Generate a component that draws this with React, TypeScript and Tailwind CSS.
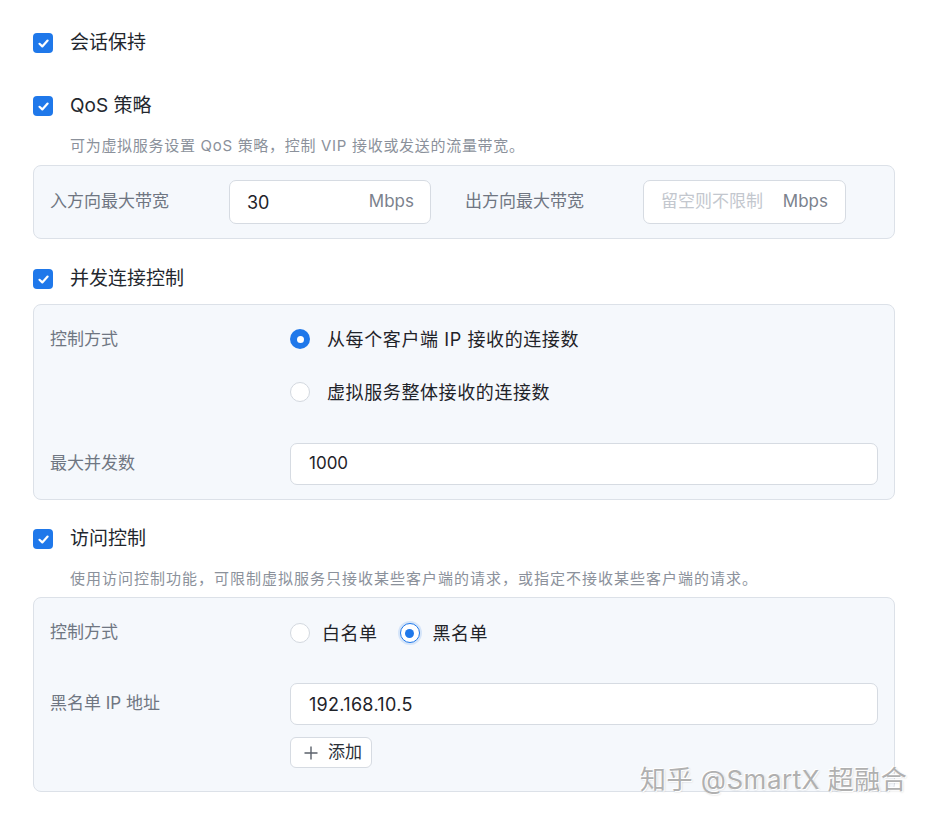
import React from "react";

const FONT = '"Inter", "Noto Sans CJK SC", "Noto Sans", sans-serif';

function Check() {
  return (
    <span className="flex h-[20px] w-[20px] items-center justify-center rounded-[4px] bg-[#1f78ea]">
      <svg width="13" height="13" viewBox="0 0 13 13" fill="none">
        <path d="M2.5 6.8 L5.3 9.4 L10.6 3.6" stroke="white" strokeWidth="2.2" strokeLinecap="round" strokeLinejoin="round" />
      </svg>
    </span>
  );
}

function Heading({ text }: { text: string }) {
  return (
    <div className="flex h-[24px] items-center">
      <div className="ml-[33px]">
        <Check />
      </div>
      <span className="ml-[17px] text-[19px] leading-[24px] text-[#23272e]">{text}</span>
    </div>
  );
}

function Desc({ text, wide }: { text: string; wide?: boolean }) {
  return (
    <div
      className={
        wide
          ? "ml-[70px] text-[15px] leading-[20px] tracking-[1px] text-[#8b919b]"
          : "ml-[70px] text-[15px] leading-[20px] tracking-[0.7px] text-[#8b919b]"
      }
    >
      {text}
    </div>
  );
}

function RadioFilled() {
  return (
    <span className="flex h-[20px] w-[20px] items-center justify-center rounded-full bg-[#1f78ea]">
      <span className="h-[7px] w-[7px] rounded-full bg-white" />
    </span>
  );
}

function RadioRing() {
  return (
    <span className="flex h-[20px] w-[20px] items-center justify-center rounded-full border-[1.5px] border-[#1f78ea] bg-white shadow-[0_0_0_2px_rgba(31,120,234,0.15)]">
      <span className="h-[9px] w-[9px] rounded-full bg-[#1f78ea]" />
    </span>
  );
}

function RadioEmpty() {
  return <span className="block h-[20px] w-[20px] rounded-full border border-[#d3d8df] bg-white" />;
}

export default function App() {
  return (
    <div
      className="relative h-[821px] w-[938px] overflow-hidden bg-white"
      style={{ fontFamily: FONT }}
    >
      <div className="flex flex-col pt-[31px]">
        <Heading text="会话保持" />
        <div className="mt-[39px]">
          <Heading text="QoS 策略" />
        </div>
        <div className="mt-[18px]">
          <Desc text="可为虚拟服务设置 QoS 策略，控制 VIP 接收或发送的流量带宽。" />
        </div>
        {/* Box 1 */}
        <div className="ml-[33px] mt-[9px] w-[862px] rounded-[8px] border border-[#dce1e8] bg-[#f5f8fc] px-[16px] py-[14px]">
          <div className="flex items-center">
            <span className="w-[179px] text-[17px] text-[#6f7682]">入方向最大带宽</span>
            <div className="flex h-[44px] w-[202px] items-center justify-between rounded-[7px] border border-[#d6dbe2] bg-white pl-[17px] pr-[16px]">
              <span className="text-[18px] text-[#1f2329]">30</span>
              <span className="text-[17px] text-[#7b828d]">Mbps</span>
            </div>
            <span className="ml-[34px] w-[178px] text-[17px] text-[#6f7682]">出方向最大带宽</span>
            <div className="flex h-[44px] w-[203px] items-center justify-between rounded-[7px] border border-[#d6dbe2] bg-white px-[17px]">
              <span className="text-[17px] text-[#c3c7ce]">留空则不限制</span>
              <span className="text-[17px] text-[#7b828d]">Mbps</span>
            </div>
          </div>
        </div>
        <div className="mt-[28px]">
          <Heading text="并发连接控制" />
        </div>
        {/* Box 2 */}
        <div className="ml-[33px] mt-[13px] w-[862px] rounded-[8px] border border-[#dce1e8] bg-[#f5f8fc] px-[16px] pb-[14px] pt-[22px]">
          <div className="flex">
            <span className="w-[240px] text-[17px] leading-[24px] text-[#6f7682]">控制方式</span>
            <div className="flex flex-col gap-[29px]">
              <div className="flex h-[24px] items-center">
                <RadioFilled />
                <span className="ml-[17px] text-[18px] tracking-[0.6px] text-[#1f2329]">从每个客户端 IP 接收的连接数</span>
              </div>
              <div className="flex h-[24px] items-center">
                <RadioEmpty />
                <span className="ml-[17px] text-[18px] tracking-[0.6px] text-[#1f2329]">虚拟服务整体接收的连接数</span>
              </div>
            </div>
          </div>
          <div className="mt-[39px] flex items-center">
            <span className="w-[240px] text-[17px] text-[#6f7682]">最大并发数</span>
            <div className="flex h-[42px] flex-1 items-center rounded-[7px] border border-[#d6dbe2] bg-white px-[18px]">
              <span className="text-[17px] text-[#1f2329]">1000</span>
            </div>
          </div>
        </div>
        <div className="mt-[27px]">
          <Heading text="访问控制" />
        </div>
        <div className="mt-[18px]">
          <Desc wide text="使用访问控制功能，可限制虚拟服务只接收某些客户端的请求，或指定不接收某些客户端的请求。" />
        </div>
        {/* Box 3 */}
        <div className="ml-[33px] mt-[8px] w-[862px] rounded-[8px] border border-[#dce1e8] bg-[#f5f8fc] px-[16px] pb-[23px] pt-[23px]">
          <div className="flex h-[24px] items-center">
            <span className="w-[240px] text-[17px] text-[#6f7682]">控制方式</span>
            <RadioEmpty />
            <span className="ml-[12px] text-[18px] tracking-[0.5px] text-[#1f2329]">白名单</span>
            <span className="ml-[22px]">
              <RadioRing />
            </span>
            <span className="ml-[13px] text-[18px] tracking-[0.5px] text-[#1f2329]">黑名单</span>
          </div>
          <div className="mt-[38px] flex items-center">
            <span className="w-[240px] text-[17px] text-[#6f7682]">黑名单 IP 地址</span>
            <div className="flex h-[42px] flex-1 items-center rounded-[7px] border border-[#d6dbe2] bg-white px-[18px]">
              <span className="text-[18px] tracking-[0.3px] text-[#1f2329]">192.168.10.5</span>
            </div>
          </div>
          <div className="ml-[240px] mt-[12px] flex">
            <div className="flex h-[31px] w-[82px] items-center gap-[9px] rounded-[6px] border border-[#d6dbe2] bg-white pl-[12px]">
              <svg width="16" height="16" viewBox="0 0 16 16" fill="none">
                <path d="M8 1.5 V14.5 M1.5 8 H14.5" stroke="#5b616b" strokeWidth="1.4" />
              </svg>
              <span className="text-[17px] text-[#2b3038]">添加</span>
            </div>
          </div>
        </div>
      </div>
      {/* watermark */}
      <div
        className="absolute left-[640px] top-[763px] text-[26px] leading-[34px] tracking-[0.5px] text-[#b0b0b0]"
        style={{ textShadow: "1px 1px 0 #ffffff, -1px -1px 0 #ffffff, 1px 1px 2px rgba(0,0,0,0.2)" }}
      >
        知乎 @SmartX 超融合
      </div>
    </div>
  );
}
